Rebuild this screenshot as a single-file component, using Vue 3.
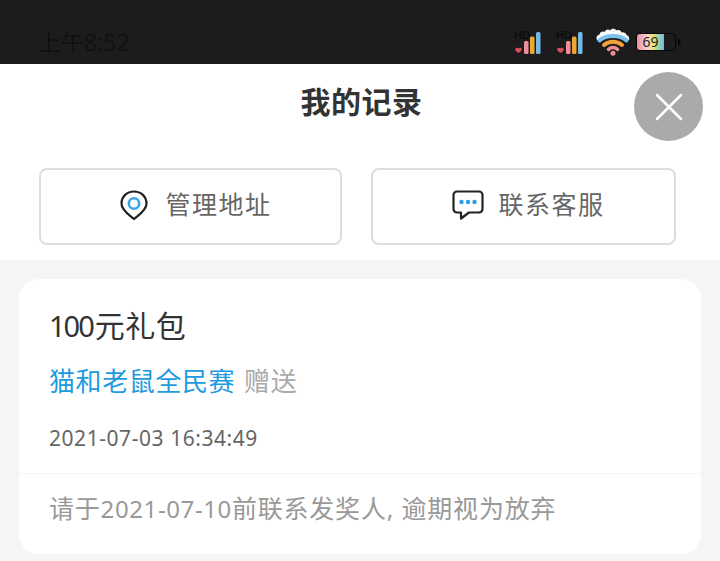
<template>
  <div class="page">
    <!-- status bar -->
    <div class="status-bar">
      <span class="time">上午8:52</span>
      <div class="status-icons">
        <svg v-for="n in 2" :key="n" class="signal" width="32" height="26" viewBox="0 0 32 26">
          <text x="0" y="9" class="hd">HD</text>
          <path d="M4.500 23c-1.400-1.100-3.300-1.800-3.300-3.500 0-2 2.400-2.400 3.300-1 .9-1.400 3.300-1 3.300 1 0 1.700-1.900 2.400-3.300 3.500z" fill="#d9505c" />
          <rect x="10" y="11" width="4.500" height="13" rx="1.500" fill="#ec8f99" />
          <rect x="16" y="6.500" width="4.500" height="17.500" rx="1.500" fill="#efa52e" />
          <rect x="22" y="2" width="4.500" height="22" rx="1.500" fill="#74b9e6" />
        </svg>
        <svg class="wifi" width="34" height="30" viewBox="0 0 34 30">
          <path d="M1 14c-1.500-3 .3-5 2.500-5.500 .5-2.500 3-3.500 5-2.500 1-2.500 4-3.500 5.500-1.500 1.500-2.500 5-2.500 6.500 0 2-1 4-.5 5 2 2-.5 4.500 .5 5 2.500 1.800 .5 3.300 2.500 2.500 5.500-6-6-25-6-32 0z" fill="#f8f8f8" />
          <path d="M3.500 14.500C10 8.500 24 8.500 30.500 14.500" fill="none" stroke="#7cc0ec" stroke-width="4" stroke-linecap="round" />
          <path d="M8 19C13 14.800 21 14.800 26 19" fill="none" stroke="#f2a23a" stroke-width="4" stroke-linecap="round" />
          <path d="M12.500 23.300C15.300 21 18.700 21 21.500 23.300" fill="none" stroke="#ee8d97" stroke-width="3.500" stroke-linecap="round" />
          <circle cx="17" cy="27.300" r="2.500" fill="#ee8d97" />
        </svg>
        <div class="battery">
          <div class="battery-shell">
            <div class="battery-fill"><span>69</span></div>
          </div>
          <i class="battery-nub"></i>
        </div>
      </div>
    </div>

    <!-- header -->
    <div class="header">
      <h1 class="title">我的记录</h1>
      <button class="close">
        <svg width="30" height="30" viewBox="0 0 30 30" stroke="#fff" stroke-width="2.500" stroke-linecap="round">
          <line x1="3" y1="3" x2="27" y2="27" />
          <line x1="27" y1="3" x2="3" y2="27" />
        </svg>
      </button>
      <div class="actions">
        <div class="action">
          <svg width="30" height="32" viewBox="0 0 30 32" fill="none">
            <path d="M15 30C12 27 2.500 22 2.500 14.500 2.500 7.500 8 2.500 15 2.500s12.500 5 12.500 12C27.500 22 18 27 15 30z" stroke="#222" stroke-width="2.200" stroke-linejoin="round" />
            <circle cx="15" cy="14.500" r="5.200" stroke="#3ba4e6" stroke-width="2.600" />
          </svg>
          <span>管理地址</span>
        </div>
        <div class="action action-service">
          <svg width="32" height="30" viewBox="0 0 32 30" fill="none">
            <path d="M5 1.500h22a3.500 3.500 0 0 1 3.500 3.500v14a3.500 3.500 0 0 1-3.500 3.500H17L9 28.500v-6H5A3.500 3.500 0 0 1 1.500 19V5A3.500 3.500 0 0 1 5 1.500z" stroke="#222" stroke-width="2.200" stroke-linejoin="round" />
            <circle cx="9.500" cy="12" r="2.200" fill="#2f9fe6" />
            <circle cx="16" cy="12" r="2.200" fill="#2f9fe6" />
            <circle cx="22.500" cy="12" r="2.200" fill="#2f9fe6" />
          </svg>
          <span>联系客服</span>
        </div>
      </div>
    </div>

    <!-- record list -->
    <div class="content">
      <div class="card">
        <div class="card-main">
          <div class="prize"><span class="amount">100</span>元礼包</div>
          <div class="source"><span class="sender">猫和老鼠全民赛</span> <span class="gift">赠送</span></div>
          <div class="date">2021-07-03 16:34:49</div>
        </div>
        <div class="card-note">请于<span class="note-date">2021-07-10</span>前联系发奖人, 逾期视为放弃</div>
      </div>
    </div>
  </div>
</template>

<script setup>
</script>

<style scoped>
.page {
  position: relative;
  width: 720px;
  height: 561px;
  overflow: hidden;
  background: #f5f5f5;
  font-family: "Noto Sans", "Noto Sans CJK SC", sans-serif;
}

.status-bar {
  height: 64px;
  box-sizing: border-box;
  padding: 25px 38px 0;
  display: flex;
  justify-content: space-between;
  align-items: flex-start;
  background: #1c1c1c;
}

.time {
  font-size: 23px;
  line-height: 34px;
  color: #111;
}

.status-icons {
  display: flex;
  align-items: flex-start;
  margin-top: 1px;
  margin-right: 1px;
}

.signal {
  margin-top: 4px;
  margin-left: 10px;
}

.hd {
  font-family: "Liberation Sans", sans-serif;
  font-size: 11px;
  font-weight: 700;
  fill: #0d0d0d;
}

.wifi {
  margin-left: 8px;
}

.battery {
  display: flex;
  align-items: center;
  margin-left: 6px;
  margin-top: 7px;
}

.battery-shell {
  width: 40px;
  height: 18px;
  box-sizing: border-box;
  border: 1px solid #050505;
  border-radius: 4px;
  overflow: hidden;
}

.battery-fill {
  width: 27px;
  height: 100%;
  background: linear-gradient(90deg, #ec8d99, #f6d3d6 38%, #f7e36a 58%, #9fd6a0 78%, #6db8e8);
  text-align: center;
}

.battery-fill span {
  display: block;
  font-size: 14px;
  line-height: 16px;
  color: #222;
}

.battery-nub {
  width: 0;
  height: 0;
  margin-left: 2px;
  border-left: 3px solid #050505;
  border-top: 4px solid transparent;
  border-bottom: 4px solid transparent;
}

.header {
  background: #fff;
  height: 196px;
  box-sizing: border-box;
  padding: 18px 0 0 3px;
}

.title {
  margin: 0;
  font-size: 30px;
  line-height: 40px;
  font-weight: 700;
  letter-spacing: 0.500px;
  color: #333;
  text-align: center;
}

.close {
  position: absolute;
  top: 72px;
  left: 634px;
  width: 69px;
  height: 69px;
  padding: 0;
  border: none;
  border-radius: 50%;
  background: #aaa;
  display: flex;
  align-items: center;
  justify-content: center;
}

.actions {
  display: grid;
  grid-template-columns: 303px 305px;
  gap: 29px;
  margin: 46px 0 0 36px;
}

.action {
  height: 77px;
  box-sizing: border-box;
  padding: 0 0 4px 10px;
  border: 2px solid #ddd;
  border-radius: 8px;
  display: flex;
  align-items: center;
  justify-content: center;
  gap: 16px;
  font-size: 25px;
  letter-spacing: 1.500px;
  color: #666;
}

.action span {
  margin-bottom: 3px;
}

.action-service {
  gap: 14px;
}

.content {
  padding: 19px 19px 0;
}

.card {
  height: 275px;
  box-sizing: border-box;
  background: #fff;
  border-radius: 20px;
  display: flex;
  flex-direction: column;
}

.card-main {
  height: 195px;
  box-sizing: border-box;
  padding: 27px 30px 0;
  border-bottom: 1px solid #f5f5f5;
}

.prize {
  font-size: 30px;
  line-height: 40px;
  letter-spacing: 0.500px;
  color: #333;
}

.amount {
  font-size: 29px;
  letter-spacing: -2px;
  margin-right: 2px;
}

.source {
  margin-top: 17px;
  font-size: 26px;
  line-height: 36px;
}

.sender {
  color: #1e9ade;
  letter-spacing: 0.600px;
}

.gift {
  color: #aaa;
  letter-spacing: 0.800px;
  margin-left: 2px;
}

.date {
  margin-top: 24px;
  font-size: 21px;
  line-height: 30px;
  letter-spacing: 0.550px;
  color: #666;
}

.card-note {
  padding: 16px 30px 0;
  font-size: 25px;
  line-height: 36px;
  letter-spacing: 0.800px;
  color: #999;
}

.note-date {
  font-size: 24px;
  letter-spacing: 0.600px;
}
</style>
